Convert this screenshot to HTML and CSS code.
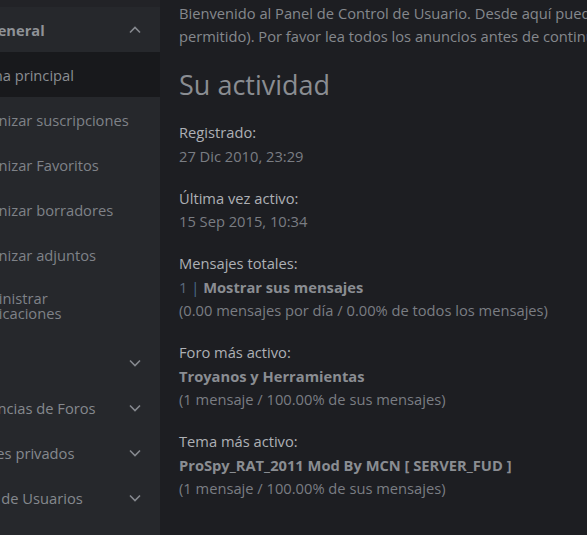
FILE: index.html
```html
<!DOCTYPE html>
<html lang="es">
<head>
<meta charset="utf-8">
<title>Panel de Control de Usuario</title>
<link rel="stylesheet" href="styles.css">
</head>
<body>
<div class="page">
  <aside class="sidebar">
    <div class="side-top"></div>
    <div class="sec sec-open">
      <span class="sec-label sec-label-general">General</span>
      <svg class="chev" width="12" height="8" viewBox="0 0 12 8"><path d="M1 6.5 L6 1.5 L11 6.5" fill="none" stroke="#85888e" stroke-width="1.6"/></svg>
    </div>
    <div class="item item-active"><span class="item-label">Página principal</span></div>
    <div class="item"><span class="item-label">Organizar suscripciones</span></div>
    <div class="item"><span class="item-label">Organizar Favoritos</span></div>
    <div class="item"><span class="item-label">Organizar borradores</span></div>
    <div class="item"><span class="item-label">Organizar adjuntos</span></div>
    <div class="item item-two"><span class="item-label item-label-two">Administrar<br>notificaciones</span></div>
    <div class="sec">
      <span class="sec-label">Perfil</span>
      <svg class="chev" width="12" height="8" viewBox="0 0 12 8"><path d="M1 1.5 L6 6.5 L11 1.5" fill="none" stroke="#85888e" stroke-width="1.6"/></svg>
    </div>
    <div class="sec">
      <span class="sec-label">Preferencias de Foros</span>
      <svg class="chev" width="12" height="8" viewBox="0 0 12 8"><path d="M1 1.5 L6 6.5 L11 1.5" fill="none" stroke="#85888e" stroke-width="1.6"/></svg>
    </div>
    <div class="sec">
      <span class="sec-label">Mensajes privados</span>
      <svg class="chev" width="12" height="8" viewBox="0 0 12 8"><path d="M1 1.5 L6 6.5 L11 1.5" fill="none" stroke="#85888e" stroke-width="1.6"/></svg>
    </div>
    <div class="sec">
      <span class="sec-label">Grupos de Usuarios</span>
      <svg class="chev" width="12" height="8" viewBox="0 0 12 8"><path d="M1 1.5 L6 6.5 L11 1.5" fill="none" stroke="#85888e" stroke-width="1.6"/></svg>
    </div>
  </aside>
  <main class="main">
    <p class="intro">Bienvenido al Panel de Control de Usuario. Desde aquí puede monitorear, ver y actualizar su perfil, preferencias, foros a los que está suscrito y temas. También puede enviar mensajes a otros usuarios (si está<br>permitido). Por favor lea todos los anuncios antes de continuar.</p>
    <h2 class="title">Su actividad</h2>
    <dl class="stats">
      <div class="stat">
        <dt>Registrado:</dt>
        <dd>27 Dic 2010, 23:29</dd>
      </div>
      <div class="stat">
        <dt>Última vez activo:</dt>
        <dd>15 Sep 2015, 10:34</dd>
      </div>
      <div class="stat">
        <dt>Mensajes totales:</dt>
        <dd><span class="num">1</span> <span class="sep">|</span> <a class="strong" href="#">Mostrar sus mensajes</a></dd>
        <dd>(0.00 mensajes por día / 0.00% de todos los mensajes)</dd>
      </div>
      <div class="stat">
        <dt>Foro más activo:</dt>
        <dd><a class="strong" href="#">Troyanos y Herramientas</a></dd>
        <dd>(1 mensaje / 100.00% de sus mensajes)</dd>
      </div>
      <div class="stat">
        <dt>Tema más activo:</dt>
        <dd><a class="strong" href="#">ProSpy_RAT_2011 Mod By MCN [ SERVER_FUD ]</a></dd>
        <dd>(1 mensaje / 100.00% de sus mensajes)</dd>
      </div>
    </dl>
  </main>
</div>
</body>
</html>
```

FILE: styles.css
```css
html, body {
  margin: 0;
  padding: 0;
  background: #1d1e22;
  overflow: hidden;
}
body {
  font-family: "Open Sans", "Noto Sans", sans-serif;
  font-size: 14.7px;
  color: #8b8e93;
}
.page {
  display: flex;
  width: 587px;
  height: 535px;
  overflow: hidden;
}
.sidebar {
  flex: 0 0 160px;
  width: 160px;
  background: #26282c;
  display: flex;
  flex-direction: column;
  overflow: hidden;
}
.side-top {
  height: 7px;
  background: #222327;
  flex: 0 0 7px;
}
.sec {
  height: 45px;
  flex: 0 0 45px;
  display: flex;
  align-items: center;
  justify-content: space-between;
  padding-right: 19px;
  white-space: nowrap;
  overflow: hidden;
  box-sizing: border-box;
}
.sec-label {
  margin-left: -53px;
  color: #85888e;
}
.sec-label-general {
  margin-left: -13px;
  font-weight: 700;
  color: #8f9297;
}
.chev {
  flex: 0 0 12px;
  display: block;
}
.item {
  height: 45px;
  flex: 0 0 45px;
  display: flex;
  align-items: center;
  white-space: nowrap;
  overflow: hidden;
  box-sizing: border-box;
}
.item-active {
  background: #18191c;
}
.item-label {
  margin-left: -35px;
  color: #7f8288;
}
.item-active .item-label {
  color: #8a8d92;
}
.item-two {
  height: 63px;
  flex: 0 0 63px;
  align-items: flex-start;
  padding-top: 14px;
}
.item-label-two {
  line-height: 15px;
  margin-left: -33px;
}
.main {
  flex: 1 1 auto;
  padding-left: 19px;
  overflow: hidden;
  white-space: nowrap;
}
.intro {
  margin: 2px 0 0 0;
  line-height: 23px;
  color: #85888d;
}
.title {
  margin: 19px 0 0 0;
  font-size: 27px;
  font-weight: 400;
  line-height: 36px;
  color: #8a8d92;
}
.stats {
  margin: 18px 0 0 0;
  line-height: 23.5px;
}
.stat {
  margin-bottom: 18.5px;
}
.stat dt {
  color: #adb0b5;
}
.stat dd {
  margin: 0;
  color: #7a7d83;
}
.num {
  color: #5b6b7e;
}
.sep {
  color: #4a6a90;
}
.strong {
  font-weight: 700;
  color: #8a8d92;
  text-decoration: none;
}
```
